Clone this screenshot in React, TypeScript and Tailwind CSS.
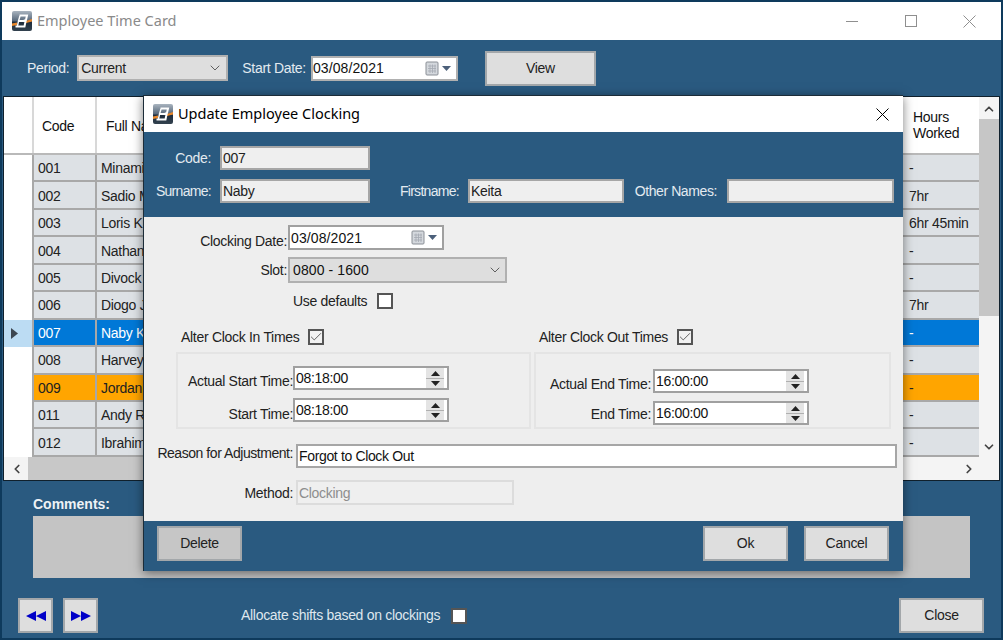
import { Check, ChevronDown, ChevronLeft, ChevronRight, ChevronUp } from "lucide-react";

const rows = [
  { code: "001", name: "Minami", hours: "-" },
  { code: "002", name: "Sadio M", hours: "7hr" },
  { code: "003", name: "Loris K", hours: "6hr 45min" },
  { code: "004", name: "Nathan", hours: "-" },
  { code: "005", name: "Divock", hours: "-" },
  { code: "006", name: "Diogo J", hours: "7hr" },
  { code: "007", name: "Naby K", hours: "-", state: "selected" },
  { code: "008", name: "Harvey", hours: "-" },
  { code: "009", name: "Jordan", hours: "-", state: "flagged" },
  { code: "011", name: "Andy R", hours: "-" },
  { code: "012", name: "Ibrahim", hours: "-" },
];

function Logo() {
  return (
    <svg width="20" height="20" viewBox="0 0 20 20" className="shrink-0">
      <defs>
        <linearGradient id="logoBg" x1="0" y1="0" x2="0" y2="1">
          <stop offset="0" stopColor="#a9b4bf" />
          <stop offset="0.5" stopColor="#56677a" />
          <stop offset="0.55" stopColor="#1e2c3c" />
          <stop offset="1" stopColor="#33424f" />
        </linearGradient>
      </defs>
      <rect width="20" height="20" rx="2" fill="url(#logoBg)" />
      <path d="M0 12.5 L5 11.5 L5 14 L0 15 Z" fill="#e8872b" />
      <path d="M14 10 L20 8 L20 10.5 L14 12 Z" fill="#e8872b" />
      <path
        d="M7.5 4.5 H15 L14 9 L11.5 10 L13.5 10.5 L12.5 15.5 H3.5 M6.5 10 H11"
        fill="none"
        stroke="#fff"
        strokeWidth="2"
      />
      <path d="M8 5 L6.5 10 L5.5 15" fill="none" stroke="#fff" strokeWidth="1.4" />
    </svg>
  );
}

function CloseGlyph({ color, className }: { color: string; className?: string }) {
  return (
    <svg width="13" height="13" viewBox="0 0 13 13" className={className}>
      <path d="M0.5 0.5l12 12M12.5 0.5l-12 12" stroke={color} strokeWidth="1" fill="none" />
    </svg>
  );
}

function CalendarDrop() {
  return (
    <span className="ml-auto flex items-center gap-[2px] pr-[5px]">
      <svg width="15" height="15" viewBox="0 0 15 15">
        <rect x="1" y="1" width="12" height="13" rx="1" fill="#d4d8dd" stroke="#8a8f96" />
        <path d="M3 5h8M3 7.5h8M3 10h8M5 3.5v8.5M7.5 3.5v8.5M10 3.5v8.5" stroke="#a4aab2" strokeWidth="0.8" />
      </svg>
      <svg width="9" height="5" viewBox="0 0 9 5">
        <path d="M0 0h9L4.5 5z" fill="#4c607a" />
      </svg>
    </span>
  );
}

function Spinner() {
  return (
    <span className="ml-auto mr-[3px] flex h-[20px] w-[18px] flex-col items-center justify-center gap-[2px] bg-[#e4e4e4]">
      <svg width="9" height="5" viewBox="0 0 9 5">
        <path d="M0 5h9L4.5 0z" fill="#222" />
      </svg>
      <span className="h-px w-full bg-[#b0b0b0]" />
      <svg width="9" height="5" viewBox="0 0 9 5">
        <path d="M0 0h9L4.5 5z" fill="#222" />
      </svg>
    </span>
  );
}

function TimeBox({ value }: { value: string }) {
  return (
    <div className="flex h-[24px] w-[156px] items-center border-2 border-[#a0a0a0] bg-white pl-[1px] text-[#111]">
      {value}
      <Spinner />
    </div>
  );
}

function CheckBox({ checked }: { checked?: boolean }) {
  return (
    <span className={`flex h-[16px] w-[16px] shrink-0 items-center justify-center border-2 border-[#555] ${checked ? "bg-[#f2f2f2]" : "bg-white"}`}>
      {checked && <Check size={14} strokeWidth={1.4} className="shrink-0 text-[#444]" />}
    </span>
  );
}

function ReadOnly({ value, className }: { value: string; className: string }) {
  return (
    <div className={`flex h-[24px] items-center border-2 border-[#a6a6a6] bg-[#efefef] pl-[1px] text-[#222] ${className}`}>
      {value}
    </div>
  );
}

function Btn({ label, className }: { label: string; className: string }) {
  return (
    <button className={`flex h-[35px] w-[85px] items-center justify-center border-2 border-[#a3a7aa] text-[#222] ${className}`}>
      {label}
    </button>
  );
}

function Grid() {
  return (
    <div className="mx-[1px] flex h-[385px] flex-col border border-[#10202c] bg-white">
      <div className="flex min-h-0 flex-1">
        <div className="min-w-0 flex-1 overflow-hidden">
          <div className="flex h-[58px] border-b-2 border-[#b9b9b9] text-[#111]">
            <div className="w-[30px] border-r-2 border-[#d8d8d8]" />
            <div className="flex w-[63px] items-center border-r-2 border-[#d8d8d8] pl-[8px] pt-[2px]">Code</div>
            <div className="flex flex-1 items-center pl-[9px] pt-[2px]">Full Name</div>
            <div className="flex w-[74px] items-center pl-[8px] leading-[16px]">Hours<br />Worked</div>
          </div>
          {rows.map((r) => {
            const tone =
              r.state === "selected"
                ? "bg-[#0078d7] text-white"
                : r.state === "flagged"
                  ? "bg-[#ffa500] text-[#222]"
                  : "bg-[#dde1e5] text-[#222]";
            return (
              <div key={r.code} className="flex h-[27.45px] text-[#222]">
                <div className={`flex w-[30px] items-center border-r-2 border-[#a8a8a8] pl-[7px] ${r.state === "selected" ? "bg-[#bcdcf3]" : "bg-white"}`}>
                  {r.state === "selected" && (
                    <svg width="7" height="11" viewBox="0 0 7 11">
                      <path d="M0 0l7 5.5L0 11z" fill="#3c4650" />
                    </svg>
                  )}
                </div>
                <div className={`flex w-[63px] items-center border-r-2 border-b-2 border-[#a8a8a8] pl-[4px] pt-[2px] ${tone}`}>{r.code}</div>
                <div className={`flex flex-1 items-center border-b-2 border-[#a8a8a8] pl-[4px] pt-[2px] ${tone}`}>{r.name}</div>
                <div className={`flex w-[74px] items-center border-b-2 border-[#a8a8a8] pl-[4px] pt-[2px] ${tone}`}>{r.hours}</div>
              </div>
            );
          })}
        </div>
        <div className="flex w-[20px] flex-col items-center bg-[#f4f4f4]">
          <ChevronUp size={14} strokeWidth={3} className="mt-[4px] h-[16px] text-[#444]" />
          <div className="mt-[2px] h-[197px] w-full bg-[#c6c6c6]" />
          <ChevronDown size={14} strokeWidth={3} className="mt-auto mb-[3px] text-[#444]" />
        </div>
      </div>
      <div className="flex h-[23px] items-center bg-[#f4f4f4]">
        <ChevronLeft size={14} strokeWidth={3} className="ml-[6px] text-[#444]" />
        <div className="ml-[4px] h-full w-[860px] bg-[#c8c8c8]" />
        <ChevronRight size={14} strokeWidth={3} className="ml-auto mr-[23px] text-[#444]" />
      </div>
    </div>
  );
}

function Dialog() {
  return (
    <div className="absolute left-[141px] top-[93px] flex h-[476px] w-[760px] flex-col border-t border-l border-[#1c2c38] bg-[#2a5a80] shadow-[0_2px_10px_rgba(0,0,0,0.5)]">
      <div className="flex h-[36px] shrink-0 items-center bg-white pl-[9px] pr-[14px] font-['Noto_Sans',sans-serif] text-[14.5px] tracking-normal text-black">
        <Logo />
        <span className="ml-[5px]">Update Employee Clocking</span>
        <CloseGlyph color="#000" className="ml-auto" />
      </div>

      <div className="h-[85px] shrink-0 text-[#e3eaf0]">
        <div className="mt-[14px] flex items-center">
          <span className="w-[67px] text-right">Code:</span>
          <ReadOnly value="007" className="ml-[9px] w-[150px]" />
        </div>
        <div className="mt-[9px] flex items-center">
          <span className="w-[67px] text-right tracking-[-0.7px]">Surname:</span>
          <ReadOnly value="Naby" className="ml-[9px] w-[150px]" />
          <span className="w-[89px] text-right tracking-[-0.7px]">Firstname:</span>
          <ReadOnly value="Keita" className="ml-[9px] w-[156px]" />
          <span className="w-[93px] text-right tracking-[-0.4px]">Other Names:</span>
          <ReadOnly value="" className="ml-[10px] w-[167px]" />
        </div>
      </div>

      <div className="h-[304px] shrink-0 bg-[#eeeeee] pt-[8px] leading-[16px] text-[#222]">
        <div className="flex items-center">
          <span className="mt-[6px] w-[143px] text-right">Clocking Date:</span>
          <div className="ml-[1px] flex h-[25px] w-[156px] items-center border-2 border-[#a0a0a0] bg-white pl-[1px] tracking-[0.1px] text-[#111]">
            03/08/2021
            <CalendarDrop />
          </div>
        </div>
        <div className="mt-[7px] flex items-center">
          <span className="w-[143px] text-right">Slot:</span>
          <div className="ml-[1px] flex h-[26px] w-[219px] items-center border-2 border-[#b0b0b0] bg-[#dedede] pl-[3px] tracking-[0.1px] text-[#111]">
            0800 - 1600
            <ChevronDown size={16} strokeWidth={1.4} className="ml-auto mr-[2px] text-[#555]" />
          </div>
        </div>
        <div className="mt-[10px] flex items-center">
          <span className="ml-[149px] w-[84px]">Use defaults</span>
          <CheckBox />
        </div>
        <div className="mt-[20px] flex items-center">
          <span className="ml-[37px] w-[127px]">Alter Clock In Times</span>
          <CheckBox checked />
          <span className="ml-[215px] w-[138px]">Alter Clock Out Times</span>
          <CheckBox checked />
        </div>
        <div className="mt-[7px] flex">
          <div className="ml-[32px] h-[77px] w-[355px] border-2 border-[#e4e4e4] pt-[12px]">
            <div className="flex items-center">
              <span className="mt-[6px] w-[115px] text-right">Actual Start Time:</span>
              <TimeBox value="08:18:00" />
            </div>
            <div className="mt-[8px] flex items-center">
              <span className="mt-[8px] w-[115px] text-right">Start Time:</span>
              <TimeBox value="08:18:00" />
            </div>
          </div>
          <div className="ml-[3px] h-[77px] w-[357px] border-2 border-[#e4e4e4] pt-[15px]">
            <div className="flex items-center">
              <span className="mt-[6px] w-[115px] text-right">Actual End Time:</span>
              <span className="w-[2px]" />
              <TimeBox value="16:00:00" />
            </div>
            <div className="mt-[8px] flex items-center">
              <span className="mt-[2px] w-[115px] text-right">End Time:</span>
              <span className="w-[2px]" />
              <TimeBox value="16:00:00" />
            </div>
          </div>
        </div>
        <div className="mt-[15px] flex items-center">
          <span className="mb-[6px] w-[149px] text-right tracking-[-0.45px]">Reason for Adjustment:</span>
          <div className="ml-[3px] flex h-[24px] w-[601px] items-center border-2 border-[#a6a6a6] bg-white pl-[1px] tracking-[-0.35px] text-[#111]">
            Forgot to Clock Out
          </div>
        </div>
        <div className="mt-[12px] flex items-center">
          <span className="w-[149px] text-right">Method:</span>
          <div className="ml-[3px] flex h-[25px] w-[218px] items-center border-2 border-[#dcdcdc] bg-[#efefef] pl-[1px] text-[#8d8d8d]">
            Clocking
          </div>
        </div>
      </div>

      <div className="flex flex-1 items-start pl-[13px] pr-[14px] pt-[5px]">
        <Btn label="Delete" className="bg-[#c6c6c6]" />
        <Btn label="Ok" className="ml-auto bg-[#dedede]" />
        <Btn label="Cancel" className="ml-[16px] bg-[#dedede]" />
      </div>
    </div>
  );
}

export default function App() {
  return (
    <div className="relative flex h-[640px] w-[1003px] flex-col overflow-hidden border-2 border-[#0e3a5c] bg-[#2a5a80] font-['Liberation_Sans',sans-serif] text-[14px] tracking-[-0.3px]">
      <div className="flex h-[38px] shrink-0 items-center bg-white pl-[10px] text-[#8a8a8a]">
        <Logo />
        <span className="ml-[5px] font-['Noto_Sans',sans-serif] text-[14.5px] tracking-normal">Employee Time Card</span>
        <div className="ml-auto flex items-center">
          <span className="mr-[47px] h-px w-[12px] bg-[#8f8f8f]" />
          <span className="mr-[46px] h-[12px] w-[12px] border border-[#8f8f8f]" />
          <CloseGlyph color="#8f8f8f" className="mr-[25px]" />
        </div>
      </div>

      <div className="flex h-[56px] shrink-0 items-center text-[#e3eaf0]">
        <span className="ml-[25px]">Period:</span>
        <div className="ml-[8px] flex h-[26px] w-[151px] items-center border-2 border-[#b0b0b0] bg-[#dedede] pl-[2px] text-[#222]">
          Current
          <ChevronDown size={16} strokeWidth={1.4} className="ml-auto mr-[3px] text-[#555]" />
        </div>
        <span className="ml-[14px]">Start Date:</span>
        <div className="ml-[5px] flex h-[25px] w-[147px] items-center border-2 border-[#b0b0b0] bg-white pl-[0px] tracking-[0.1px] text-[#111]">
          03/08/2021
          <CalendarDrop />
        </div>
        <button className="ml-[27px] flex h-[35px] w-[111px] items-center justify-center border-2 border-[#a3a7aa] bg-[#dedede] text-[#222]">
          View
        </button>
      </div>

      <Grid />

      <div className="ml-[31px] mt-[13px] font-bold tracking-normal text-[#eef2f5]">Comments:</div>
      <div className="ml-[31px] mt-px h-[62px] w-[937px] shrink-0 bg-[#c4c4c4]" />

      <div className="mt-[20px] flex items-center">
        <button className="ml-[16px] flex h-[35px] w-[35px] items-center justify-center border-2 border-[#a3a7aa] bg-[#dedede]">
          <svg width="20" height="10" viewBox="0 0 20 10">
            <path d="M10 0v10L0 5zM20 0v10L10 5z" fill="#0000c8" />
          </svg>
        </button>
        <button className="ml-[10px] flex h-[35px] w-[35px] items-center justify-center border-2 border-[#a3a7aa] bg-[#dedede]">
          <svg width="20" height="10" viewBox="0 0 20 10">
            <path d="M0 0v10l10-5zM10 0v10l10-5z" fill="#0000c8" />
          </svg>
        </button>
        <span className="ml-[143px] text-[#dfe7ee]">Allocate shifts based on clockings</span>
        <span className="ml-[11px]">
          <CheckBox />
        </span>
        <Btn label="Close" className="ml-auto mr-[17px] bg-[#dedede]" />
      </div>

      <Dialog />
    </div>
  );
}
